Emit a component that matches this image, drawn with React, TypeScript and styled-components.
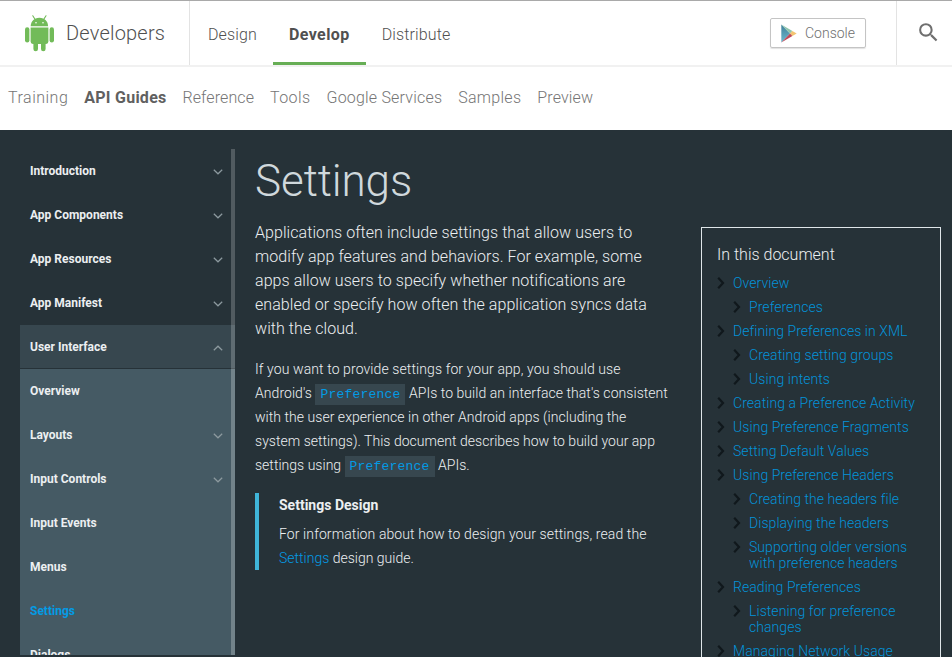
import React from 'react';
import styled, { createGlobalStyle } from 'styled-components';

const GlobalStyle = createGlobalStyle`
  * { box-sizing: border-box; }
  body { margin: 0; background: #263238; overflow: hidden; }
  h1, h2, h3, p, ul { margin: 0; padding: 0; font-weight: inherit; }
  a { text-decoration: none; color: inherit; }
`;

const Page = styled.div`
  height: 657px;
  display: flex;
  flex-direction: column;
  overflow: hidden;
  font: 300 14px/24px Roboto, sans-serif;
  color: #eceff1;
  background: #263238;
`;

const Header = styled.header`
  display: flex;
  flex: none;
  height: 67px;
  background: #fff;
  border-top: 1px solid #a9a9a9;
  border-bottom: 2px solid #f1f1f1;
  color: #505050;
`;

const Brand = styled.a`
  display: flex;
  align-items: flex-start;
  width: 190px;
  padding: 14px 0 0 24px;
  border-right: 1px solid #e3e3e3;
`;

const BrandName = styled.span`
  margin-left: 11px;
  padding-top: 4px;
  font-size: 20px;
  line-height: 28px;
  letter-spacing: 0.2px;
`;

const Tabs = styled.nav`
  display: flex;
  margin-left: 2px;
`;

const Tab = styled.a<{ $active?: boolean }>`
  height: 64px;
  padding: 22px 16px 0;
  font-size: 16px;
  letter-spacing: ${(p) => (p.$active ? 0.4 : 0.14)}px;
  font-weight: ${(p) => (p.$active ? 700 : 300)};
  border-bottom: ${(p) => (p.$active ? '3px solid #67ae55' : 'none')};
`;

const HeaderTools = styled.div`
  display: flex;
  margin-left: auto;
`;

const ConsoleButton = styled.a`
  display: flex;
  align-items: center;
  width: 96px;
  height: 30px;
  margin: 17px 30px 0 0;
  padding-left: 10px;
  border: 1px solid #c4c4c4;
  border-radius: 2px;
  box-shadow: 0 1px 1px rgba(0, 0, 0, 0.12);
  color: #707070;
`;

const ConsoleLabel = styled.span`
  margin-left: 8px;
`;

const SearchButton = styled.a`
  width: 56px;
  padding: 19px 0 0 19px;
  border-left: 1px solid #e3e3e3;
`;

const SubNav = styled.nav`
  display: flex;
  flex: none;
  gap: 16px;
  height: 63px;
  padding: 19px 8px 0;
  background: #fff;
  color: #757575;
  font-size: 16px;
`;

const SubLink = styled.a<{ $active?: boolean; $track: number }>`
  letter-spacing: ${(p) => p.$track}px;
  font-weight: ${(p) => (p.$active ? 700 : 300)};
  color: ${(p) => (p.$active ? '#606060' : 'inherit')};
`;

const Body = styled.div`
  display: flex;
  flex: 1;
  min-height: 0;
  padding-left: 20px;
`;

const Sidebar = styled.aside`
  display: flex;
  width: 215px;
  height: 506px;
  margin-top: 19px;
  overflow: hidden;
`;

const SideList = styled.div`
  width: 211px;
`;

const SideRow = styled.a<{ $tone?: 'open' | 'child'; $current?: boolean }>`
  display: flex;
  align-items: center;
  justify-content: space-between;
  height: 44px;
  padding: 0 8px 0 10px;
  font-size: 12px;
  font-weight: 700;
  color: ${(p) => (p.$current ? '#039be5' : '#eceff1')};
  background: ${(p) => (p.$tone === 'open' ? '#37474f' : p.$tone === 'child' ? '#455a64' : 'transparent')};
  border-bottom: ${(p) => (p.$tone === 'open' ? '1px solid #263238' : 'none')};
`;

const ChevronIcon = styled.svg`
  margin-top: 2px;
`;

const ScrollTrack = styled.div`
  display: flex;
  flex-direction: column;
  width: 4px;
`;

const TrackPart = styled.div<{ $h: number; $color: string }>`
  flex: none;
  height: ${(p) => p.$h}px;
  background: ${(p) => p.$color};
`;

const Article = styled.main`
  width: 426px;
  margin-left: 20px;
  padding-top: 23px;
`;

const Title = styled.h1`
  font-size: 44px;
  line-height: 56px;
  font-weight: 300;
  letter-spacing: -0.1px;
  color: #cfd8dc;
`;

const Intro = styled.p`
  margin-top: 12px;
  font-size: 16px;
  letter-spacing: 0.067px;
  white-space: pre-line;
`;

const Para = styled.p`
  margin-top: 16px;
`;

const Line = styled.span<{ $track: number }>`
  display: block;
  height: 24px;
  white-space: nowrap;
  letter-spacing: ${(p) => p.$track}px;
`;

const Code = styled.a`
  padding: 3px 5px;
  font: 13px "Liberation Mono", monospace;
  letter-spacing: 0.2px;
  color: #039be5;
  background: #37474f;
`;

const Link = styled.a`
  color: #039be5;
`;

const Note = styled.section`
  margin-top: 16px;
  height: 77px;
  padding-left: 20px;
  border-left: 4px solid #3fb5d9;
`;

const NoteTitle = styled.h3`
  font-size: 14px;
  font-weight: 700;
  margin-bottom: 5px;
`;

const Toc = styled.aside`
  width: 240px;
  height: 460px;
  margin: 97px 0 0 20px;
  padding: 15px;
  border: 1px solid #dfe6e9;
`;

const TocTitle = styled.h2`
  font-size: 16px;
  margin-bottom: 8px;
`;

const TocItem = styled.a<{ $level: number }>`
  display: flex;
  align-items: flex-start;
  margin-left: ${(p) => p.$level * 16}px;
  margin-bottom: 8px;
  line-height: 16px;
  letter-spacing: 0.06px;
  white-space: pre-line;
  color: #0392d9;
`;

const Marker = styled.svg`
  flex: none;
  width: 16px;
  height: 16px;
`;

const Android = () => (
  <svg width="31" height="37" viewBox="0 0 31 37" fill="#72bb59">
    <path d="M6.7 11.2C6.9 6.4 9.9 2.8 15.4 2.8S23.9 6.4 24.1 11.2Z" />
    <path d="M8.8.8l2.2 3.4M22 .8l-2.2 3.4" stroke="#72bb59" strokeWidth="1.1" strokeLinecap="round" />
    <path d="M6.6 12.4h17.8v14.2a2.3 2.3 0 0 1-2.3 2.3h-.5v5.1a2.3 2.3 0 0 1-4.6 0v-5.1h-3v5.1a2.3 2.3 0 0 1-4.6 0v-5.1H8.9a2.3 2.3 0 0 1-2.3-2.3Z" />
    <rect x="1" y="12.2" width="4.4" height="15.2" rx="2.2" />
    <rect x="25.6" y="12.2" width="4.4" height="15.2" rx="2.2" />
    <circle cx="12" cy="7.8" r=".8" fill="#fff" />
    <circle cx="19" cy="7.8" r=".8" fill="#fff" />
  </svg>
);

const Play = () => (
  <svg width="16" height="19" viewBox="0 0 16 19">
    <defs>
      <linearGradient id="playBlue" x1="0" y1="0" x2="0" y2="1">
        <stop offset="0" stopColor="#3f7f98" />
        <stop offset="1" stopColor="#6cb9cf" />
      </linearGradient>
    </defs>
    <path d="M.3.4v18L9 9.4Z" fill="url(#playBlue)" />
    <path d="M.3.4L9 9.4 11.4 7Z" fill="#8fc4ac" />
    <path d="M11.4 7L9 9.4l2.4 2.5 4.3-2.5Z" fill="#f3c471" />
    <path d="M.3 18.4L9 9.4l2.4 2.5Z" fill="#bd4a5a" />
  </svg>
);

const Search = () => (
  <svg width="25" height="25" viewBox="0 0 24 24" fill="#6f6f6f">
    <path d="M15.5 14h-.79l-.28-.27A6.47 6.47 0 0 0 16 9.5 6.5 6.5 0 1 0 9.5 16c1.61 0 3.09-.59 4.23-1.57l.27.28v.79l5 4.99L20.49 19l-4.99-5zm-6 0C7.01 14 5 11.99 5 9.5S7.01 5 9.5 5 14 7.01 14 9.5 11.99 14 9.5 14z" />
  </svg>
);

const Chevron = ({ up }: { up?: boolean }) => (
  <ChevronIcon width="10" height="6" viewBox="0 0 10 6" fill="none" stroke="#8d9a9f" strokeWidth="1.2">
    <path d={up ? 'M.8 5.2L5 1.2l4.2 4' : 'M.8.8L5 4.8l4.2-4'} />
  </ChevronIcon>
);

const tabs = ['Design', 'Develop', 'Distribute'];
const subs: [string, number][] = [
  ['Training', 0.5],
  ['API Guides', 0.25],
  ['Reference', 0.1],
  ['Tools', 0.4],
  ['Google Services', 0.2],
  ['Samples', 0.28],
  ['Preview', 0.15],
];

type Row = { label: string; arrow?: 'up' | 'down'; tone?: 'open' | 'child'; current?: boolean };
const rows: Row[] = [
  { label: 'Introduction', arrow: 'down' },
  { label: 'App Components', arrow: 'down' },
  { label: 'App Resources', arrow: 'down' },
  { label: 'App Manifest', arrow: 'down' },
  { label: 'User Interface', arrow: 'up', tone: 'open' },
  { label: 'Overview', tone: 'child' },
  { label: 'Layouts', arrow: 'down', tone: 'child' },
  { label: 'Input Controls', arrow: 'down', tone: 'child' },
  { label: 'Input Events', tone: 'child' },
  { label: 'Menus', tone: 'child' },
  { label: 'Settings', tone: 'child', current: true },
  { label: 'Dialogs', tone: 'child' },
];

const toc: [number, string][] = [
  [0, 'Overview'],
  [1, 'Preferences'],
  [0, 'Defining Preferences in XML'],
  [1, 'Creating setting groups'],
  [1, 'Using intents'],
  [0, 'Creating a Preference Activity'],
  [0, 'Using Preference Fragments'],
  [0, 'Setting Default Values'],
  [0, 'Using Preference Headers'],
  [1, 'Creating the headers file'],
  [1, 'Displaying the headers'],
  [1, 'Supporting older versions\nwith preference headers'],
  [0, 'Reading Preferences'],
  [1, 'Listening for preference\nchanges'],
  [0, 'Managing Network Usage'],
];

export default function App() {
  return (
    <Page>
      <GlobalStyle />
      <Header>
        <Brand>
          <Android />
          <BrandName>Developers</BrandName>
        </Brand>
        <Tabs>
          {tabs.map((t) => (
            <Tab key={t} $active={t === 'Develop'}>{t}</Tab>
          ))}
        </Tabs>
        <HeaderTools>
          <ConsoleButton>
            <Play />
            <ConsoleLabel>Console</ConsoleLabel>
          </ConsoleButton>
          <SearchButton>
            <Search />
          </SearchButton>
        </HeaderTools>
      </Header>
      <SubNav>
        {subs.map(([label, track]) => (
          <SubLink key={label} $track={track} $active={label === 'API Guides'}>{label}</SubLink>
        ))}
      </SubNav>
      <Body>
        <Sidebar>
          <SideList>
            {rows.map((r) => (
              <SideRow key={r.label} $tone={r.tone} $current={r.current}>
                {r.label}
                {r.arrow && <Chevron up={r.arrow === 'up'} />}
              </SideRow>
            ))}
          </SideList>
          <ScrollTrack>
            <TrackPart $h={176} $color="#515b60" />
            <TrackPart $h={43} $color="#5f6c72" />
            <TrackPart $h={1} $color="#515b60" />
            <TrackPart $h={286} $color="#72838a" />
          </ScrollTrack>
        </Sidebar>
        <Article>
          <Title>Settings</Title>
          <Intro>
            {'Applications often include settings that allow users to\nmodify app features and behaviors. For example, some\napps allow users to specify whether notifications are\nenabled or specify how often the application syncs data\nwith the cloud.'}
          </Intro>
          <Para>
            <Line $track={0.1}>If you want to provide settings for your app, you should use</Line>
            <Line $track={0.05}>
              Android's <Code>Preference</Code> APIs to build an interface that's consistent
            </Line>
            <Line $track={0.04}>with the user experience in other Android apps (including the</Line>
            <Line $track={0.03}>system settings). This document describes how to build your app</Line>
            <Line $track={0.02}>
              settings using <Code>Preference</Code> APIs.
            </Line>
          </Para>
          <Note>
            <NoteTitle>Settings Design</NoteTitle>
            <p>
              <Line $track={0.1}>For information about how to design your settings, read the</Line>
              <Line $track={0}>
                <Link>Settings</Link> design guide.
              </Line>
            </p>
          </Note>
        </Article>
        <Toc>
          <TocTitle>In this document</TocTitle>
          {toc.map(([level, label]) => (
            <TocItem key={label} $level={level}>
              <Marker viewBox="0 0 16 16" fill="none" stroke="#10181c" strokeWidth="2.2">
                <path d="M1.2 2.8L6 8l-4.8 5.2" />
              </Marker>
              {label}
            </TocItem>
          ))}
        </Toc>
      </Body>
    </Page>
  );
}
